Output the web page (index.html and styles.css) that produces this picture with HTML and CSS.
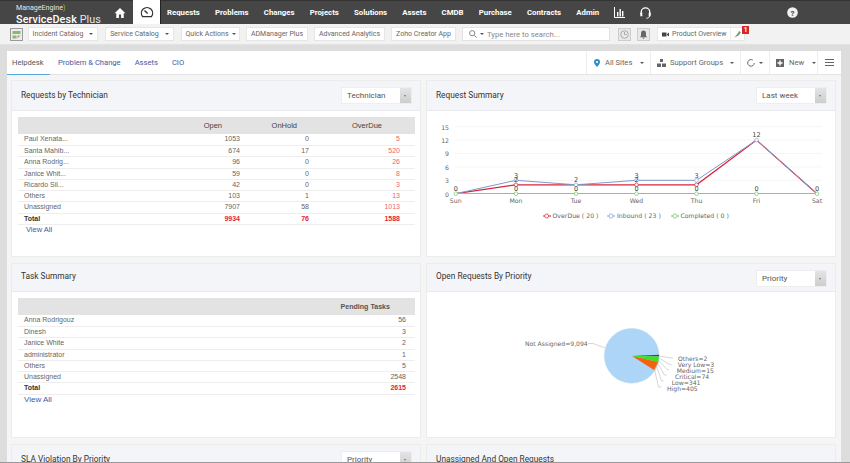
FILE: index.html
```html
<!DOCTYPE html>
<html lang="en">
<head>
<meta charset="utf-8">
<title>ServiceDesk Plus</title>
<link rel="stylesheet" href="styles.css">
</head>
<body>
<div class="app">
  <header class="topbar">
    <div class="logo">
      <div class="logo-me">ManageEngine<span class="logo-arc">)</span></div>
      <div class="logo-sd"><b>ServiceDesk</b> Plus</div>
    </div>
    <a class="home"><svg width="12" height="12" viewBox="0 0 12 12"><path d="M6 1 .6 6.2h1.7V11h2.6V7.6h2.2V11h2.6V6.2h1.7z" fill="#fff"/></svg></a>
    <a class="dash"><svg width="14" height="12" viewBox="0 0 14 12"><path d="M2.6 10.6a5.6 5.6 0 1 1 8.8 0z" fill="none" stroke="#333" stroke-width="1.3"/><path d="M4.5 4.5 7.6 7.6" stroke="#333" stroke-width="1.4"/></svg></a>
    <nav class="nav">
      <a>Requests</a><a>Problems</a><a>Changes</a><a>Projects</a><a>Solutions</a><a>Assets</a><a>CMDB</a><a>Purchase</a><a>Contracts</a><a>Admin</a>
      <svg width="11" height="11" viewBox="0 0 11 11"><path d="M.5 0v10.5H11" fill="none" stroke="#fff"/><path d="M3 5h1.4v4.5H3zM5.5 2h1.4v7.5H5.5zM8 4h1.4v5.5H8z" fill="#fff"/></svg>
      <svg class="headset" width="11" height="12" viewBox="0 0 11 12"><path d="M1.2 7V5.2a4.3 4.3 0 0 1 8.6 0V7" fill="none" stroke="#fff" stroke-width="1.3"/><path d="M.3 5.8h2v3.4h-2zM8.7 5.8h2v3.4h-2z" fill="#fff"/><path d="M9.5 9c0 1.5-1.4 2.2-3 2.2" fill="none" stroke="#fff"/></svg>
    </nav>
    <svg class="help" width="11" height="11" viewBox="0 0 11 11"><circle cx="5.5" cy="5.5" r="5.3" fill="#f2f2f2"/><text x="5.5" y="8.6" text-anchor="middle" class="help-q">?</text></svg>
  </header>

  <div class="toolbar">
    <svg class="tool-logo" width="13" height="13" viewBox="0 0 13 13"><rect x=".5" y=".5" width="12" height="12" fill="#e9efe4" stroke="#9a9a9a"/><path d="M2.5 3h8v3h-8zM2.5 7.500h4v3h-4z" fill="#8bb878"/><path d="M7.500 7.500h3l-3 3z" fill="#d88"/></svg>
    <a class="tbtn w-incident">Incident Catalog<span class="caret caret-far"></span></a>
    <a class="tbtn w-service">Service Catalog<span class="caret caret-far"></span></a>
    <a class="tbtn w-quick">Quick Actions<span class="caret"></span></a>
    <a class="tbtn w-ad">ADManager Plus</a>
    <a class="tbtn w-adv">Advanced Analytics</a>
    <a class="tbtn w-zoho">Zoho Creator App</a>
    <div class="search">
      <svg width="8" height="8" viewBox="0 0 8 8"><circle cx="3.200" cy="3.200" r="2.600" fill="none" stroke="#888"/><path d="M5.200 5.200 7.600 7.600" stroke="#888"/></svg>
      <span class="caret"></span>
      <span class="search-text">Type here to search...</span>
    </div>
    <span class="icon-box box-clock"><svg width="9" height="9" viewBox="0 0 9 9"><circle cx="4.500" cy="4.500" r="3.800" fill="none" stroke="#aaa"/><path d="M4.500 2v2.500h2" fill="none" stroke="#aaa"/></svg></span>
    <span class="icon-box box-bell"><svg width="9" height="9" viewBox="0 0 9 9"><path d="M4.500.5C2.800.5 2 1.800 2 3.500V6L.8 7.300h7.400L7 6V3.500C7 1.800 6.200.5 4.500.5zM3.500 7.800a1 1 0 0 0 2 0z" fill="#666"/></svg></span>
    <div class="overview">
      <svg width="7" height="5" viewBox="0 0 7 5"><path d="M0 .5h4.500v4H0zM5 2l2-1.500v4L5 3z" fill="#444"/></svg>
      <span class="overview-text">Product Overview</span>
      <span class="pin"><svg width="8" height="8" viewBox="0 0 8 8"><path d="M.5 7.500 3 4.200 5.200 1l1.800 1.300L4.600 5.400z" fill="#7d9a7d"/></svg></span>
      <span class="badge">1</span>
    </div>
  </div>

  <main class="main">
    <div class="panel">
      <div class="tabs">
        <a class="tab active">Helpdesk</a>
        <a class="tab">Problem &amp; Change</a>
        <a class="tab">Assets</a>
        <a class="tab">CIO</a>
        <div class="tab-tools">
          <a class="tool t-sites"><svg width="6" height="8" viewBox="0 0 6 8"><path d="M3 0a3 3 0 0 0-3 3c0 2 3 5 3 5s3-3 3-5a3 3 0 0 0-3-3z" fill="#2b8fc9"/><circle cx="3" cy="3" r="1.100" fill="#fff"/></svg><span>All Sites</span><span class="caret"></span></a>
          <a class="tool t-groups"><svg width="9" height="8" viewBox="0 0 9 8"><path d="M3 0h3v3H3zM0 4.500h4V8H0zM5 4.500h4V8H5z" fill="#666"/></svg><span>Support Groups</span><span class="caret"></span></a>
          <a class="tool t-refresh"><svg width="8" height="8" viewBox="0 0 8 8"><path d="M5.800 1.100A3.300 3.300 0 1 0 7.300 4" fill="none" stroke="#666"/></svg><span class="caret"></span></a>
          <a class="tool t-new"><svg width="8" height="8" viewBox="0 0 8 8"><path d="M0 0h8v8H0z" fill="#666"/><path d="M3.300 1.500h1.400v1.800h1.800v1.400H4.700v1.800H3.300V4.700H1.500V3.300h1.800z" fill="#fff"/></svg><span>New</span><span class="caret"></span></a>
          <a class="tool t-menu"><span class="burger"></span></a>
        </div>
      </div>

      <div class="cards">
        <section class="card card-a">
          <div class="card-head head-a"><h2>Requests by Technician</h2><div class="select"><span>Technician</span><i></i></div></div>
          <div class="card-body">
            <table class="data">
              <colgroup><col class="c-name"><col class="c-open"><col class="c-hold"><col class="c-over"></colgroup>
              <thead><tr><th></th><th class="h-open">Open</th><th class="h-hold">OnHold</th><th class="h-over">OverDue</th></tr></thead>
              <tbody>
                <tr><td>Paul Xenata...</td><td>1053</td><td>0</td><td class="red">5</td></tr>
                <tr><td>Santa Mahib...</td><td>674</td><td>17</td><td class="red">520</td></tr>
                <tr><td>Anna Rodrig...</td><td>96</td><td>0</td><td class="red">26</td></tr>
                <tr><td>Janice Whit...</td><td>59</td><td>0</td><td class="red">8</td></tr>
                <tr><td>Ricardo Sil...</td><td>42</td><td>0</td><td class="red">3</td></tr>
                <tr><td>Others</td><td>103</td><td>1</td><td class="red">13</td></tr>
                <tr><td>Unassigned</td><td>7907</td><td>58</td><td class="red">1013</td></tr>
                <tr class="total"><td>Total</td><td class="red">9934</td><td class="red">76</td><td class="red">1588</td></tr>
              </tbody>
            </table>
            <a class="view-all">View All</a>
          </div>
        </section>

        <section class="card card-a">
          <div class="card-head head-a"><h2>Request Summary</h2><div class="select"><span>Last week</span><i></i></div></div>
          <svg class="chart" width="408" height="147" viewBox="427 111 408 147">
            <g class="grid">
              <path d="M455 126.700H822M455 140.100H822M455 153.500H822M455 166.900H822M455 180.300H822"/>
            </g>
            <g class="axis">
              <text x="449" y="129.500" text-anchor="end">15</text><text x="449" y="142.900" text-anchor="end">12</text><text x="449" y="156.300" text-anchor="end">9</text><text x="449" y="169.700" text-anchor="end">6</text><text x="449" y="183.100" text-anchor="end">3</text><text x="449" y="196.500" text-anchor="end">0</text>
              <text x="455.700" y="202.800" text-anchor="middle">Sun</text><text x="516" y="202.800" text-anchor="middle">Mon</text><text x="576" y="202.800" text-anchor="middle">Tue</text><text x="636.500" y="202.800" text-anchor="middle">Wed</text><text x="696.500" y="202.800" text-anchor="middle">Thu</text><text x="756.500" y="202.800" text-anchor="middle">Fri</text><text x="817" y="202.800" text-anchor="middle">Sat</text>
            </g>
            <polyline class="l-over" points="455.700,193.700 516,184.800 576,184.800 636.500,184.800 696.500,184.800 756.500,140.100 817,193.700"/>
            <polyline class="l-in" points="455.700,193.700 516,180.300 576,184.800 636.500,180.300 696.500,180.300 756.500,140.100 817,193.700"/>
            <polyline class="l-done" points="455.700,193.500 817,193.500"/>
            <g class="dots-blue">
              <circle cx="516" cy="180.300" r="1.800"/><circle cx="576" cy="184.800" r="1.800"/><circle cx="636.500" cy="180.300" r="1.800"/><circle cx="696.500" cy="180.300" r="1.800"/><circle cx="756.500" cy="140.100" r="1.800"/>
            </g>
            <g class="dots-red">
              <circle cx="516" cy="184.800" r="1.800"/><circle cx="636.500" cy="184.800" r="1.800"/><circle cx="696.500" cy="184.800" r="1.800"/>
            </g>
            <g class="dots-green">
              <circle cx="455.700" cy="193.700" r="1.800"/><circle cx="516" cy="193.700" r="1.800"/><circle cx="576" cy="193.700" r="1.800"/><circle cx="636.500" cy="193.700" r="1.800"/><circle cx="696.500" cy="193.700" r="1.800"/><circle cx="756.500" cy="193.700" r="1.800"/><circle cx="817" cy="193.700" r="1.800"/>
            </g>
            <g class="vals">
              <text x="455.700" y="190.500" text-anchor="middle">0</text>
              <text x="516" y="177.500" text-anchor="middle">3</text><text x="516" y="181.500" text-anchor="middle">2</text><text x="516" y="190.500" text-anchor="middle">0</text>
              <text x="576" y="181.500" text-anchor="middle">2</text><text x="576" y="190.500" text-anchor="middle">0</text>
              <text x="636.500" y="177.500" text-anchor="middle">3</text><text x="636.500" y="181.500" text-anchor="middle">2</text><text x="636.500" y="190.500" text-anchor="middle">0</text>
              <text x="696.500" y="177.500" text-anchor="middle">3</text><text x="696.500" y="190.500" text-anchor="middle">0</text>
              <text x="756.500" y="136.500" text-anchor="middle">12</text><text x="756.500" y="190.500" text-anchor="middle">0</text>
              <text x="817" y="190.500" text-anchor="middle">0</text>
            </g>
            <g class="legend">
              <path class="l-over" d="M543 216h8"/><circle class="lg-red" cx="546.700" cy="216" r="2"/><text x="552.500" y="218.300">OverDue ( 20 )</text>
              <path class="l-in" d="M607 216h8"/><circle class="lg-blue" cx="611" cy="216" r="2"/><text x="617" y="218.300">Inbound ( 23 )</text>
              <path class="l-done" d="M671 216h8"/><circle class="lg-green" cx="675" cy="216" r="2"/><text x="680.500" y="218.300">Completed ( 0 )</text>
            </g>
          </svg>
        </section>

        <section class="card card-b">
          <div class="card-head head-b"><h2>Task Summary</h2></div>
          <div class="card-body">
            <table class="data">
              <colgroup><col class="c-task"><col class="c-pend"></colgroup>
              <thead><tr><th></th><th class="h-pend">Pending Tasks</th></tr></thead>
              <tbody>
                <tr><td>Anna Rodrigouz</td><td class="pad-pend">56</td></tr>
                <tr><td>Dinesh</td><td class="pad-pend">3</td></tr>
                <tr><td>Janice White</td><td class="pad-pend">2</td></tr>
                <tr><td>administrator</td><td class="pad-pend">1</td></tr>
                <tr><td>Others</td><td class="pad-pend">5</td></tr>
                <tr><td>Unassigned</td><td class="pad-pend">2548</td></tr>
                <tr class="total"><td>Total</td><td class="pad-pend red">2615</td></tr>
              </tbody>
            </table>
            <a class="view-all view-b">View All</a>
          </div>
        </section>

        <section class="card card-b">
          <div class="card-head head-b"><h2>Open Requests By Priority</h2><div class="select"><span>Priority</span><i></i></div></div>
          <svg class="chart" width="408" height="146" viewBox="427 293 408 146">
            <circle cx="631.700" cy="356.800" r="27.400" fill="#acd5f7" stroke="#c4d4e2" stroke-width=".5"/>
            <path d="M632 357 659 355.800 659 357.400z" fill="#7a2f5c"/>
            <path d="M632 357 659 357.400 658.300 363z" fill="#35e81c"/>
            <path d="M632 357 658.300 363 654 371z" fill="#f4610f"/>
            <g class="leaders">
              <path d="M588 344.500h5l12 4.500"/>
              <path d="M659 357l12 2h2"/>
              <path d="M658.500 358.500l11 7h2"/>
              <path d="M658 361l9 9.500h2"/>
              <path d="M657.500 364l7 12h2"/>
              <path d="M656.500 367l5 15h2"/>
              <path d="M654.500 370l4 18h3"/>
            </g>
            <g class="pie-labels">
              <text x="525" y="347">Not Assigned=9,094</text>
              <text x="678" y="362">Others=2</text>
              <text x="677.700" y="368">Very Low=3</text>
              <text x="676.700" y="374">Medium=15</text>
              <text x="675" y="380">Critical=74</text>
              <text x="671.700" y="386">Low=341</text>
              <text x="667" y="392">High=405</text>
            </g>
          </svg>
        </section>

        <section class="card card-c">
          <div class="card-head head-a"><h2>SLA Violation By Priority</h2><div class="select"><span>Priority</span><i></i></div></div>
        </section>
        <section class="card card-c">
          <div class="card-head head-a"><h2>Unassigned And Open Requests</h2></div>
        </section>
      </div>
    </div>
  </main>
  <div class="foot-line"></div>
</div>
</body>
</html>
```
FILE: styles.css
```css
* { box-sizing: border-box; }
html, body { margin: 0; height: 463px; overflow: hidden; }
body { font-family: Roboto, "Liberation Sans", sans-serif; color: #555; background: #ddd; }
.app { display: flex; flex-direction: column; height: 463px; }

/* top bar */
.topbar { flex: none; display: flex; align-items: center; height: 24px; background: #464646; border-top: 1px solid #333; }
.logo { align-self: flex-start; width: 114px; padding-left: 16px; color: #fff; white-space: nowrap; }
.logo-me { font: 7.100px/8px Roboto, sans-serif; color: #e4e4e4; margin-top: 3px; }
.logo-arc { color: #9bc53d; }
.logo-sd { font: 10.800px/11px Roboto, sans-serif; color: #e8e8e8; letter-spacing: .1px; margin-top: 1.500px; }
.logo-sd b { font-weight: 500; color: #fff; }
.home { display: flex; width: 19px; }
.dash { display: flex; align-items: center; justify-content: center; width: 27px; height: 24px; background: #fff; margin: -1px 7px 0 0; box-shadow: 1px 0 0 #222; }
.nav { display: flex; align-items: center; gap: 15.200px; }
.nav a { font-size: 7.800px; font-weight: 700; color: #fff; }
.help { margin-left: 135.500px; }
.help-q { font: 700 8px Roboto, sans-serif; fill: #444; }

/* tool bar */
.toolbar { flex: none; display: flex; align-items: center; height: 21px; padding-left: 10px; background: #f2f2f2; border-bottom: 1px solid #e2e2e2; }
.tool-logo { margin-right: 5px; }
.tbtn { display: flex; align-items: center; justify-content: center; height: 14px; margin-right: 6px; font-size: 7px; color: #666; background: #fff; border: 1px solid #e6e6e6; white-space: nowrap; }
.w-incident { width: 70px; margin-right: 7px; }
.w-service { width: 69px; margin-right: 7px; }
.w-quick { width: 59px; }
.w-ad { width: 62px; }
.w-adv { width: 71px; }
.w-zoho { width: 65px; }
.caret { display: inline-block; width: 0; height: 0; margin-left: 3px; border: 2px solid transparent; border-top: 2.500px solid #555; border-bottom: 0; }
.caret-far { margin-left: 6px; }
.search { display: flex; align-items: center; width: 148px; height: 14px; padding-left: 6px; background: #fff; border: 1px solid #e2e2e2; }
.search-text { margin-left: 3px; font-size: 7.700px; color: #888; white-space: nowrap; }
.icon-box { display: flex; align-items: center; justify-content: center; width: 13px; height: 13px; background: #e8e8e8; border: 1px solid #ccc; }
.box-clock { margin-left: 8px; }
.box-bell { margin-left: 6px; }
.overview { position: relative; display: flex; align-items: center; width: 88px; height: 14px; margin-left: 7px; padding-left: 4px; background: #fff; border: 1px solid #e6e6e6; }
.overview-text { margin-left: 3px; font-size: 7px; color: #666; white-space: nowrap; }
.pin { display: flex; align-items: center; height: 12px; margin-left: 3px; padding-left: 3px; border-left: 1px solid #eee; }
.badge { position: absolute; top: -2.500px; right: -5px; width: 7px; height: 8px; font: 700 6.500px/8px Roboto, sans-serif; text-align: center; color: #fff; background: #d8262c; }

/* main */
.main { flex: 1; min-height: 0; overflow: hidden; padding: 6px 9px 0 7px; }
.panel { background: #f5f5f5; height: 100%; }
.tabs { display: flex; align-items: stretch; height: 24px; background: #fff; border-bottom: 1px solid #e4e4e4; font-size: 7.600px; white-space: nowrap; }
.tab { display: flex; align-items: center; padding: 0 7px; color: #3d5aa8; }
.tab.active { width: 43px; padding: 0 0 0 5px; color: #555; border-bottom: 1px solid #5aa9dd; margin-right: 1px; height: 24px; }
.tab-tools { display: flex; margin-left: auto; color: #666; }
.tool { display: flex; align-items: center; gap: 5px; padding-left: 6px; border-left: 1px solid #eee; }
.t-sites { width: 64px; padding-left: 7px; }
.t-groups { width: 90px; gap: 4px; }
.t-refresh { width: 29px; gap: 1px; }
.t-new { width: 48px; }
.t-menu { width: 24px; justify-content: center; padding: 0; }
.burger { width: 9px; height: 7px; border-top: 1px solid #666; border-bottom: 1px solid #666; position: relative; }
.burger::after { content: ""; position: absolute; left: 0; right: 0; top: 2px; height: 1px; background: #666; }

/* cards */
.cards { display: grid; grid-template-columns: 410px 410px; grid-template-rows: 177px 175px 60px; gap: 6px 5px; padding: 5px 0 0 4px; }
.card { background: #fff; border: 1px solid #ececec; overflow: hidden; }
.card-head { display: flex; align-items: flex-start; justify-content: space-between; background: #f4f5f8; border-bottom: 1px solid #e9e9ee; }
.head-a { height: 30px; }
.head-b { height: 28px; }
.card-head h2 { margin: 9px 0 0 9px; font-size: 8.300px; font-weight: 400; line-height: 10px; color: #333; }
.head-b h2 { margin-top: 7px; }
.select { display: flex; align-items: center; justify-content: space-between; width: 71px; height: 17px; margin: 6px 8px 0 0; padding-left: 5px; font-size: 8px; color: #555; background: #fff; border: 1px solid #eee; }
.select i { align-self: stretch; width: 11px; background: linear-gradient(#e4e4e4, #cdcdcd); position: relative; }
.select i::after { content: ""; position: absolute; left: 4px; top: 7px; border: 1.500px solid transparent; border-top: 2px solid #777; border-bottom: 0; }

.card-body { padding: 6px 6px 0; }
.data { width: 397px; border-collapse: collapse; table-layout: fixed; font-family: "Liberation Sans", sans-serif; font-size: 7px; }
.c-name { width: 152px; } .c-open { width: 75px; } .c-hold { width: 69px; } .c-over { width: 101px; }
.c-task { width: 300px; } .c-pend { width: 97px; }
.data th { height: 17px; padding: 0; font-weight: 400; font-size: 7.500px; text-align: right; color: #444; background: #e3e3e3; }
.h-open { padding-right: 23px !important; }
.h-hold { padding-right: 17px !important; }
.h-over { padding-right: 33px !important; }
.h-pend { padding-right: 25px !important; font-weight: 700 !important; font-size: 7.100px !important; color: #555 !important; }
.data td { height: 11px; padding: 0 5px 0 0; text-align: right; line-height: 10px; color: #666; border-bottom: 1px solid #eee; }
.data tbody tr:nth-child(4n+3) td { height: 12px; }
.data td:first-child { padding-left: 6px; text-align: left; }
.data td:last-child { padding-right: 15px; }
.data td.pad-pend { padding-right: 9px; }
.data td.red { color: #e66; }
.total td { font-weight: 700; color: #333 !important; }
.total td.red { color: #e3262e !important; }
.view-all { display: block; margin: 0 0 0 8px; font-family: "Liberation Sans", sans-serif; font-size: 7.500px; line-height: 10px; color: #4459a8; }
.view-b { margin-left: 6px; font-size: 8px; }

/* charts */
.chart { display: block; }
.grid path { fill: none; stroke: #f5f5f5; stroke-width: 1; }
.axis text, .legend text { font-family: "DejaVu Sans", sans-serif; font-size: 6.200px; fill: #666; }
.vals text { font-family: "DejaVu Sans", sans-serif; font-size: 6.500px; fill: #444; }
.l-over, .l-in, .l-done { fill: none; stroke-width: 1; }
polyline.l-over { stroke: #d8243c; stroke-width: 1.200; }
polyline.l-in { stroke: #7d98cc; }
polyline.l-done { stroke: #7fce7b; stroke-width: 1.200; }
path.l-over { stroke: #d8243c; }
path.l-in { stroke: #7da8d8; }
path.l-done { stroke: #6fc46a; }
.dots-blue circle, .lg-blue { fill: #fff; stroke: #8aa0cc; stroke-width: .7; }
.dots-red circle, .lg-red { fill: #fff; stroke: #d8243c; stroke-width: .7; }
.dots-green circle, .lg-green { fill: #fff; stroke: #6fc46a; stroke-width: .7; }
.leaders path { fill: none; stroke: #bbb; stroke-width: .6; }
.pie-labels text { font-family: "DejaVu Sans", sans-serif; font-size: 6.100px; fill: #666; }

.foot-line { flex: none; height: 1px; background: #999; }
```
